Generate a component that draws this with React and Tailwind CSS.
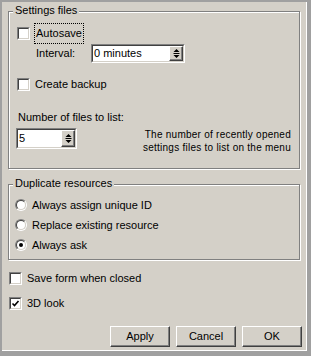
const font = "font-['Liberation_Sans',Arial,sans-serif]";

const Sunken = ({ className = '', children }) => (
  <div className={`border border-t-[#808080] border-l-[#808080] border-b-white border-r-white ${className}`}>
    <div className="w-full h-full border border-t-[#404040] border-l-[#404040] border-b-[#d4d0c8] border-r-[#d4d0c8] bg-white flex items-center">
      {children}
    </div>
  </div>
);

const Check = ({ checked }) => (
  <Sunken className="w-[13px] h-[13px] shrink-0">
    {checked && (
      <svg width="9" height="9" viewBox="0 0 9 9" className="block">
        <path d="M1.5 4.5 L3.5 6.5 L7.5 2" stroke="#000" strokeWidth="1.6" fill="none" />
      </svg>
    )}
  </Sunken>
);

const Radio = ({ checked }) => (
  <div className="w-[12px] h-[12px] rounded-full border border-t-[#808080] border-l-[#808080] border-b-white border-r-white shrink-0">
    <div className="w-full h-full rounded-full border border-t-[#404040] border-l-[#404040] border-b-[#d4d0c8] border-r-[#d4d0c8] bg-white flex items-center justify-center">
      {checked && <div className="w-[4px] h-[4px] rounded-full bg-black" />}
    </div>
  </div>
);

const SpinButton = () => (
  <div className="h-full w-[14px] border border-t-white border-l-white border-r-[#404040] border-b-[#404040] shadow-[inset_-1px_-1px_0_#808080] bg-[#d4d0c8] flex items-center justify-center shrink-0">
    <svg width="7" height="11" viewBox="0 0 7 11" className="block">
      <path d="M3.5 1 L0.5 4 H6.5 Z M0.5 7 H6.5 L3.5 10 Z" fill="#000" />
      <path d="M0.5 5.5 H6.5" stroke="#000" strokeWidth="1" />
    </svg>
  </div>
);

const Spin = ({ value, className }) => (
  <Sunken className={className}>
    <span className="flex-1 pl-[1px] leading-[13px]">{value}</span>
    <SpinButton />
  </Sunken>
);

const Group = ({ title, className = '', children }) => (
  <div className={`relative w-[292px] border border-[#808080] shadow-[inset_1px_1px_0_#fff,1px_1px_0_#fff] ${className}`}>
    <span className="absolute -top-[8px] left-[4px] bg-[#d4d0c8] px-[2px] leading-[13px]">{title}</span>
    {children}
  </div>
);

const Button = ({ children }) => (
  <button className="w-[60px] h-[21px] border border-t-white border-l-white border-r-[#404040] border-b-[#404040] shadow-[inset_-1px_-1px_0_#808080] bg-[#d4d0c8] leading-[13px]">
    {children}
  </button>
);

export default function App() {
  return (
    <div className={`w-[311px] h-[356px] bg-[#a0a0a0] pt-[2px] pl-[2px] pr-[4px] pb-[5px] text-[11px] text-black ${font}`}>
      <div className="w-full h-full bg-[#d4d0c8] border-r border-b border-white pl-[6px] pt-[9px]">
        {/* Settings files */}
        <Group title="Settings files" className="h-[158px]">
          <div className="mt-[11px] ml-[8px] h-[21px] flex items-center">
            <Check />
            <span className="ml-[4px] h-[21px] px-[1px] border border-dotted border-black flex items-center leading-[13px]">Autosave</span>
          </div>
          <div className="ml-[27px] h-[19px] flex items-center">
            <span className="w-[55px] leading-[13px]">Interval:</span>
            <Spin value="0 minutes" className="w-[94px] h-[19px]" />
          </div>
          <div className="mt-[15px] ml-[8px] h-[13px] flex items-center">
            <Check />
            <span className="ml-[5px] leading-[13px]">Create backup</span>
          </div>
          <div className="mt-[20px] ml-[9px] leading-[13px]">Number of files to list:</div>
          <div className="mt-[4px] flex items-start">
            <Spin value="5" className="ml-[7px] w-[61px] h-[21px]" />
            <div className="ml-auto mr-[8px] mt-[1px] text-right text-[10px] leading-[12.5px] tracking-[0.25px] whitespace-nowrap">
              The number of recently opened
              <br />
              settings files to list on the menu
            </div>
          </div>
        </Group>

        {/* Duplicate resources */}
        <Group title="Duplicate resources" className="mt-[15px] h-[76px]">
          <div className="pt-[10px] ml-[6px] flex flex-col">
            {[
              ['Always assign unique ID', false],
              ['Replace existing resource', false],
              ['Always ask', true],
            ].map(([label, checked]) => (
              <div key={label} className="h-[20px] flex items-center">
                <Radio checked={checked} />
                <span className="ml-[5px] leading-[13px]">{label}</span>
              </div>
            ))}
          </div>
        </Group>

        <div className="mt-[12px] ml-[1px] h-[13px] flex items-center">
          <Check />
          <span className="ml-[5px] leading-[13px]">Save form when closed</span>
        </div>
        <div className="mt-[12px] ml-[1px] h-[13px] flex items-center">
          <Check checked />
          <span className="ml-[5px] leading-[13px]">3D look</span>
        </div>

        <div className="mt-[16px] pr-[4px] flex justify-end gap-[6px]">
          <Button>Apply</Button>
          <Button>Cancel</Button>
          <Button>OK</Button>
        </div>
      </div>
    </div>
  );
}
